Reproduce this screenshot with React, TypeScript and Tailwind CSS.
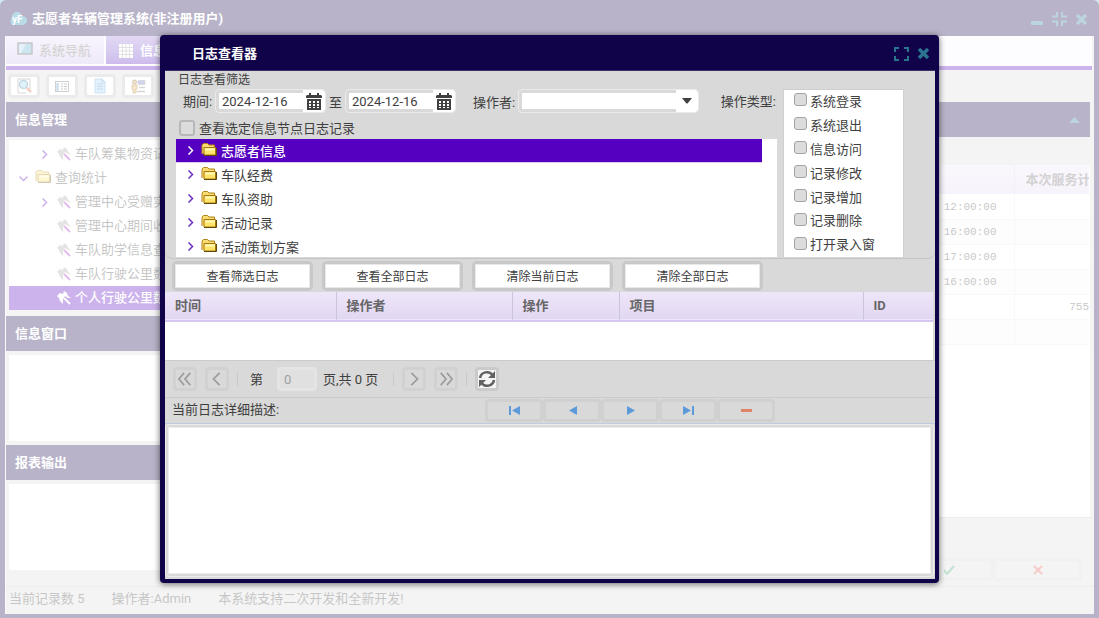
import type { ReactNode } from 'react';

const TREE = ['志愿者信息', '车队经费', '车队资助', '活动记录', '活动策划方案'];
const LOG_TYPES = ['系统登录', '系统退出', '信息访问', '记录修改', '记录增加', '记录删除', '打开录入窗'];
const LOG_ACTIONS = ['查看筛选日志', '查看全部日志', '清除当前日志', '清除全部日志'];

const NAV_ITEMS = [
  { label: '车队筹集物资记录', arrow: true },
  { label: '查询统计', folder: true },
  { label: '管理中心受赠实物', arrow: true },
  { label: '管理中心期间收支' },
  { label: '车队助学信息查询' },
  { label: '车队行驶公里数' },
  { label: '个人行驶公里数', selected: true },
];

const GRID_ROWS = [
  { time: '12:00:00', hours: '' },
  { time: '16:00:00', hours: '' },
  { time: '17:00:00', hours: '' },
  { time: '16:00:00', hours: '' },
  { time: '', hours: '755' },
  { time: '', hours: '' },
];

export default function App() {
  return (
    <div className="relative min-h-screen flex flex-col overflow-hidden bg-[#6cb4d4] font-['Roboto','Noto_Sans_CJK_SC',sans-serif] text-[13px] text-[#404040]">
      <MainWindow />

      {/* Modal mask */}
      <div className="absolute inset-0 bg-white/70" />

      <div className="absolute inset-0 flex items-center justify-center">
        <LogViewer />
      </div>
    </div>
  );
}

// ── Main window ──────────────────────────────────────────────────────────────

function MainWindow() {
  return (
    <div className="flex-1 flex flex-col rounded-t-md bg-[#110349] px-[5px] pb-1">
      <header className="h-9 flex items-center pt-[2px] pl-1 pr-[6px] text-white">
        <CloudLogo />
        <h1 className="ml-[5px] flex-1 font-bold">志愿者车辆管理系统(非注册用户)</h1>
        <div className="flex items-center gap-2 text-[#207090]">
          <button aria-label="最小化">
            <svg width="14" height="14" viewBox="0 0 14 14"><rect x="1" y="9" width="12" height="4" rx="1" fill="currentColor" /></svg>
          </button>
          <button aria-label="还原">
            <svg width="15" height="14" viewBox="0 0 15 14" fill="none" stroke="currentColor" strokeWidth="2">
              <path d="M0 4.500h5V0M10 0v4.500h5M0 9.500h5V14M15 9.500h-5V14" />
            </svg>
          </button>
          <button aria-label="关闭"><CrossIcon /></button>
        </div>
      </header>

      <div className="flex-1 flex flex-col bg-[#d9d9d9] border-l border-[#eeeeee]">
        {/* Tabs */}
        <nav className="h-[30px] mr-[2px] flex gap-[2px] bg-[#f8f8ff]">
          <a href="#nav" className="h-7 w-[98px] flex items-center gap-[6px] pt-px pl-[11px] font-medium text-[#707070] bg-linear-to-b from-[#e8dcf8] to-[#cbb8e8]">
            <svg className="mb-1" width="16" height="14" viewBox="0 0 16 14"><rect x="1" y="1" width="14" height="11" fill="#58a8d0" stroke="#444" strokeWidth="1.500" /><path d="M2 2h7L4 11H2z" fill="#a8d4ea" /></svg>
            系统导航
          </a>
          <a href="#info" className="h-7 w-[98px] flex items-center gap-[6px] pt-px pl-3 font-bold text-white bg-linear-to-b from-[#a080d8] to-[#5c18c0]">
            <svg width="16" height="16" viewBox="0 0 16 16"><rect x="1" y="1" width="14" height="14" fill="#fff" /><path d="M1 4.500h14M1 8h14M1 11.500h14M4.500 1v14M8 1v14M11.500 1v14" stroke="#999" /></svg>
            信息管理
          </a>
        </nav>
        <div className="h-1 mr-[2px] bg-[#5500bf]" />

        <div className="flex-1 flex">
          <Sidebar />
          <DataPanel />
        </div>

        <footer className="h-7 flex items-start gap-[27px] pt-[2px] pl-[3px] border-t border-[#c4c4c4]">
          <span>当前记录数 5</span>
          <span>操作者:Admin</span>
          <span>本系统支持二次开发和全新开发!</span>
        </footer>
      </div>
    </div>
  );
}

function Sidebar() {
  return (
    <aside className="w-[214px] flex flex-col">
      <div className="h-8 flex items-center gap-[6px] pl-[2px]">
        <ToolButton label="查找">
          <path d="M2 1h12v10" stroke="#777" /><path d="M2 1v14h8" stroke="#777" />
          <circle cx="7.500" cy="6.500" r="4" fill="#9cd4f0" stroke="#38789c" strokeWidth="1.500" />
          <path d="M11 10l4 4" stroke="#d86030" strokeWidth="2.500" />
        </ToolButton>
        <ToolButton label="列表">
          <rect x="1.500" y="3.500" width="13" height="10" stroke="#666" /><path d="M3.500 5v8" stroke="#2878b8" strokeWidth="2" />
          <path d="M7 6h2M7 8.500h2M7 11h2M10 6h3M10 8.500h3M10 11h3" stroke="#555" />
        </ToolButton>
        <ToolButton label="文档">
          <path d="M3 1h7l3 3v11H3z" fill="#a4d4fc" stroke="#58a0d8" /><path d="M5 6h6M5 8.500h6M5 11h6M10 1v3h3" stroke="#3888c8" />
        </ToolButton>
        <ToolButton label="人员">
          <circle cx="4.500" cy="4" r="2" fill="#e8a840" stroke="#604010" /><path d="M2 7h5v4H6v4H3v-4H2z" fill="#e8a840" stroke="#a06820" />
          <path d="M8 2.500h7v4H8z" fill="#6868d8" stroke="#888" />
          <path d="M9 9.500h6M7 13.500h8" stroke="#777" strokeWidth="1.500" />
        </ToolButton>
      </div>

      <SideHeading>信息管理</SideHeading>
      <ul className="mt-[3px] ml-[3px] pt-[2px] bg-white overflow-hidden">
        {NAV_ITEMS.map(item => <NavRow key={item.label} {...item} />)}
      </ul>

      <div className="mt-[6px]"><SideHeading>信息窗口</SideHeading></div>
      <div className="h-[86px] my-1 ml-[3px] bg-white" />
      <SideHeading>报表输出</SideHeading>
      <div className="h-[86px] my-1 ml-[3px] bg-white" />
    </aside>
  );
}

function SideHeading({ children }: { children: ReactNode }) {
  return <h2 className="h-[35px] flex items-center pl-[9px] bg-[#110349] font-bold text-white">{children}</h2>;
}

function ToolButton({ label, children }: { label: string; children: ReactNode }) {
  return (
    <button aria-label={label} className="w-8 h-6 flex items-center justify-center rounded border-[3px] border-[#bcbcbc] bg-white">
      <svg width="16" height="16" viewBox="0 0 16 16" fill="none">{children}</svg>
    </button>
  );
}

function NavRow({ label, arrow, folder, selected }: { label: string; arrow?: boolean; folder?: boolean; selected?: boolean }) {
  if (folder) {
    return (
      <li className="h-6 flex items-center pl-[10px] whitespace-nowrap">
        <Chevron className="rotate-90 text-[#5500bf]" />
        <span className="ml-[7px] mr-[4px] pb-[3px]"><FolderIcon /></span>
        {label}
      </li>
    );
  }
  return (
    <li className={`h-6 flex items-center pl-[31px] whitespace-nowrap ${selected ? 'bg-[#5500bf] text-white font-medium' : ''}`}>
      <span className="w-4"><Chevron className={arrow ? 'text-[#5500bf]' : 'invisible'} /></span>
      <svg className="mr-[3px]" width="16" height="16" viewBox="0 0 16 16">
        <path d="M1 6l3-3 3 1 1-3 3 2 1 3 3 2-3 0-3-2-2 3 0 5-3-3-1-3z" fill={selected ? '#fff' : '#a4a4a4'} />
        <path d="M8 8l6 6" stroke={selected ? '#fff' : '#a020c0'} strokeWidth="2" />
      </svg>
      {label}
    </li>
  );
}

function DataPanel() {
  return (
    <main className="flex-1 min-w-0 flex flex-col pt-8 pl-1 pr-1">
      <div className="h-[35px] flex items-center justify-end pr-[10px] bg-[#110349]">
        <svg width="11" height="6" viewBox="0 0 11 6"><path d="M5.500 0L11 6H0z" fill="#207090" /></svg>
      </div>
      <div className="mt-7 flex-1 pr-px bg-white overflow-hidden">
        <table className="w-full table-fixed border-collapse">
          <thead>
            <tr className="h-[29px] bg-linear-to-b from-[#ede4f8] to-[#e2d7f2]">
              <th className="border-r border-[#d8d0e4]" />
              <th className="w-[75px] pl-[11px] text-left font-bold text-[#666] whitespace-nowrap overflow-hidden">本次服务计</th>
            </tr>
          </thead>
          <tbody className="font-['Liberation_Mono',monospace] text-[11px]">
            {GRID_ROWS.map((row, i) => (
              <tr key={i} className="h-[25px] border-b border-[#e8e8e8] even:bg-[#f8f8f8]">
                <td className="pt-[2px] pr-[17px] text-right border-r border-[#e8e8e8]">{row.time}</td>
                <td className="pt-px text-right">{row.hours}</td>
              </tr>
            ))}
          </tbody>
        </table>
      </div>
      <div className="h-[69px] flex items-end justify-end pr-2 pb-[5px] border-t border-[#c0c0c0]">
        <button aria-label="确定" className="w-[89px] h-[23px] flex items-center justify-center rounded border-[3px] border-[#d0d0d0]">
          <svg width="12" height="10" viewBox="0 0 12 10"><path d="M1 5l3 4 7-8" fill="none" stroke="#2fa060" strokeWidth="2" /></svg>
        </button>
        <button aria-label="取消" className="w-[89px] h-[23px] flex items-center justify-center rounded border-[3px] border-[#d0d0d0]">
          <svg width="10" height="10" viewBox="0 0 10 10"><path d="M1 1l8 8M9 1L1 9" stroke="#e05048" strokeWidth="2" /></svg>
        </button>
      </div>
    </main>
  );
}

// ── Log viewer dialog ────────────────────────────────────────────────────────

function LogViewer() {
  return (
    <section
      role="dialog"
      aria-labelledby="log-title"
      className="w-full max-w-[779px] flex flex-col rounded-[4px] bg-[#110349] pl-[5px] pr-1 pb-1 shadow-[0_1px_6px_rgba(0,0,0,0.6)]"
    >
      <header className="h-9 flex items-center gap-2 pt-[2px] pl-[27px] pr-[5px] border-b border-[#3a3068]">
        <h2 id="log-title" className="flex-1 font-bold text-white">日志查看器</h2>
        <button aria-label="最大化" className="text-[#2a7490]">
          <svg width="15" height="14" viewBox="0 0 15 14" fill="none" stroke="currentColor" strokeWidth="2">
            <path d="M1 5V1h4M10 1h4v4M14 9v4h-4M5 13H1V9" />
          </svg>
        </button>
        <button aria-label="关闭" className="text-[#2a7490]"><CrossIcon /></button>
      </header>

      <div className="bg-[#d9d9d9]">
        <FilterPanel />

        <div className="h-[33px] flex gap-[9px] pl-[7px] pt-[2px]">
          {LOG_ACTIONS.map(label => (
            <button key={label} className="w-[141px] h-[30px] rounded-[5px] bg-[#c8c8c8] p-[3px] text-xs">
              <span className="h-full flex items-center justify-center pt-px border border-[#e8e8e8] bg-white">{label}</span>
            </button>
          ))}
        </div>

        <div className="h-[68px] mr-[2px] bg-white">
          <table className="w-full table-fixed border-collapse text-left text-[#666]">
            <thead>
              <tr className="h-[29px] bg-linear-to-b from-[#eee6f9] to-[#e2d7f2] border-b-2 border-[#d8c6f2]">
                <th className="w-[171px] pl-[10px] border-r border-[#ccc4dc]">时间</th>
                <th className="w-[176px] pl-[10px] border-r border-[#ccc4dc]">操作者</th>
                <th className="w-[107px] pl-[10px] border-r border-[#ccc4dc]">操作</th>
                <th className="w-[244px] pl-[10px] border-r border-[#ccc4dc]">项目</th>
                <th className="pl-[10px]">ID</th>
              </tr>
            </thead>
          </table>
        </div>

        <Pager />
        <DetailPane />
      </div>
    </section>
  );
}

function FilterPanel() {
  return (
    <fieldset className="flex-none rounded-b-lg border-b border-[#c4c4c4] pb-px">
      <legend className="h-[18px] pl-[13px] text-xs leading-[18px]">日志查看筛选</legend>
      <div className="flex pr-[31px]">
        <div className="flex-1 min-w-0">
          <div className="h-6 flex items-center">
            <label htmlFor="date-from" className="w-[50px] pt-[2px] pl-[18px]">期间:</label>
            <DateField id="date-from" />
            <label htmlFor="date-to" className="w-[19px] pt-[3px] text-center">至</label>
            <DateField id="date-to" />
            <label htmlFor="operator" className="w-[62px] pt-[3px] pl-[17px]">操作者:</label>
            <div className="w-[181px] h-6 flex rounded border border-[#ebebeb]">
              <select id="operator" className="flex-1 my-[3px] ml-[3px] appearance-none bg-white outline-none" />
              <span className="w-[22px] flex items-center justify-center rounded-r bg-white">
                <svg width="10" height="6" viewBox="0 0 10 6"><path d="M0 0h10L5.500 5.500h-1z" fill="#404040" /></svg>
              </span>
            </div>
            <span id="log-types" className="ml-auto pt-[2px] pr-px">操作类型:</span>
          </div>

          <label className="h-[26px] flex items-center gap-1 pl-[14px] pt-[4px]">
            <input type="checkbox" className="appearance-none w-4 h-4 rounded-[3px] border-2 border-[#b8b8b8] bg-[#dcdcdc]" />
            <span className="pt-px">查看选定信息节点日志记录</span>
          </label>

          <ul className="h-[118px] ml-[11px] pr-[15px] overflow-hidden bg-white">
            {TREE.map((name, i) => (
              <li
                key={name}
                className={`h-6 flex items-center border-b pl-[10px] ${i === 0 ? 'bg-[#5500c0] border-[#dccaf4] text-white font-medium' : 'border-transparent'}`}
              >
                <Chevron className={i === 0 ? 'text-white' : 'text-[#6a30c8]'} />
                <span className="ml-[6px] mr-[4px] pb-[2px]"><FolderIcon /></span>
                <span className="pt-[3px]">{name}</span>
              </li>
            ))}
          </ul>
        </div>

        <div role="group" aria-labelledby="log-types" className="ml-[6px] w-[121px] h-[168px] flex flex-col border border-[#cfcfcf] border-b-0 bg-white pl-[10px]">
          {LOG_TYPES.map(type => (
            <label key={type} className="flex-1 flex items-center gap-[3px]">
              <input type="checkbox" className="appearance-none w-[13px] h-[13px] mb-1 rounded-[3px] border border-[#a4a4a4] bg-[#dcdcdc]" />
              {type}
            </label>
          ))}
        </div>
      </div>
    </fieldset>
  );
}

function DateField({ id }: { id: string }) {
  return (
    <div className="w-[111px] h-6 flex rounded border border-[#ebebeb]">
      <input id={id} type="text" defaultValue="2024-12-16" className="flex-1 min-w-0 my-[3px] ml-[3px] pt-px pl-[3px] bg-white outline-none" />
      <button aria-label="选择日期" className="w-[22px] flex items-center justify-center rounded-r bg-white">
        <svg width="16" height="17" viewBox="0 0 16 17">
          <path d="M3 0h2v2h6V0h2v2h2l1 1v2H0V3l1-1h2zM1 6h14v11H1z" fill="#404040" />
          <path d="M3 8h2v2H3zM7 8h2v2H7zM11 8h2v2h-2zM3 11h2v2H3zM7 11h2v2H7zM11 11h2v2h-2zM3 14h2v1H3zM7 14h2v1H7zM11 14h2v1h-2z" fill="#fff" />
        </svg>
      </button>
    </div>
  );
}

function Pager() {
  return (
    <div className="h-[38px] flex items-center border-y border-[#cbcbcb] pl-2">
      <PageButton label="第一页" d="M7 1L1 8l6 7M14 1L8 8l6 7" />
      <span className="w-2" />
      <PageButton label="上一页" d="M11 1L4 8l7 7" />
      <Separator />
      <label htmlFor="page" className="w-[27px] ml-1 pt-[2px]">第</label>
      <input
        id="page"
        type="text"
        disabled
        defaultValue="0"
        className="w-10 h-6 rounded border-[3px] border-[#e4e4e4] bg-[#e0e0e0] pl-[4px] text-[#a0a0a0]"
      />
      <span className="w-[68px] pl-[6px] pt-[2px] whitespace-nowrap">页,共 0 页</span>
      <Separator />
      <PageButton label="下一页" d="M5 1l7 7-7 7" />
      <span className="w-2" />
      <PageButton label="最后一页" d="M2 1l6 7-6 7M9 1l6 7-6 7" />
      <Separator />
      <button aria-label="刷新" className="w-6 h-6 flex items-center justify-center rounded border-[3px] border-[#cacaca] bg-[#f4f4f4]">
        <svg width="18" height="18" viewBox="0 0 18 18" fill="none" stroke="#606060" strokeWidth="2.500">
          <path d="M2 8a7 7 0 0 1 12.500-3M16 10a7 7 0 0 1-12.500 3" />
          <path d="M17 1v7h-7zM1 17v-7h7z" fill="#606060" stroke="none" />
        </svg>
      </button>
    </div>
  );
}

function Separator() {
  return <span className="mx-2 h-[14px] w-px bg-[#cacaca]" />;
}

function PageButton({ label, d }: { label: string; d: string }) {
  return (
    <button aria-label={label} className="w-6 h-6 flex items-center justify-center rounded border-[3px] border-[#d1d1d1]">
      <svg width="14" height="14" viewBox="0 0 16 16" fill="none" stroke="#9c9c9c" strokeWidth="2"><path d={d} /></svg>
    </button>
  );
}

function DetailPane() {
  return (
    <>
      <div className="h-[25px] flex items-center pb-px pl-[7px]">
        <label htmlFor="detail" className="w-[313px]">当前日志详细描述:</label>
        <RecordButton label="首条"><path d="M1 1h2v9H1z" /><path d="M12 1v9L4 5.500z" /></RecordButton>
        <RecordButton label="上一条"><path d="M11 1v9L3 5.500z" /></RecordButton>
        <RecordButton label="下一条"><path d="M3 1v9l8-4.500z" /></RecordButton>
        <RecordButton label="末条"><path d="M1 1v9l8-4.500z" /><path d="M10 1h2v9h-2z" /></RecordButton>
        <RecordButton label="删除"><path d="M1 4h11v3H1z" fill="#e08468" /></RecordButton>
      </div>
      <div className="border-t border-[#bccbe0] pb-[2px] pr-px">
        <div className="rounded border border-[#ececec] p-[2px]">
          <textarea id="detail" className="block w-full h-[147px] resize-none border border-[#ececec] bg-white outline-none" />
        </div>
      </div>
    </>
  );
}

function RecordButton({ label, children }: { label: string; children: ReactNode }) {
  return (
    <button aria-label={label} className="w-[58px] h-[23px] flex items-center justify-center rounded border-[3px] border-[#d0d0d0]">
      <svg width="13" height="11" viewBox="0 0 13 11" fill="#5c9bd8">{children}</svg>
    </button>
  );
}

// ── Icons ────────────────────────────────────────────────────────────────────

function Chevron({ className }: { className: string }) {
  return (
    <svg className={className} width="9" height="9" viewBox="0 0 9 9" fill="none" stroke="currentColor" strokeWidth="1.500">
      <path d="M2.500 0.500l4 4-4 4" />
    </svg>
  );
}

function FolderIcon() {
  return (
    <svg width="16" height="14" viewBox="0 0 16 14">
      <path d="M1 11V2l1.500-1.500h4L8 2h5.500v2" fill="#f8dc70" stroke="#b48414" />
      <path d="M3 4.500h11.500v7.500H3z" fill="#ffe468" stroke="#a87810" />
      <path d="M4 5.500h10v2H4z" fill="#fff8b8" />
      <path d="M3 12.500h12.500V5" fill="none" stroke="#604808" />
    </svg>
  );
}

function CrossIcon() {
  return (
    <svg width="13" height="13" viewBox="0 0 13 13"><path d="M2 2l9 9M11 2l-9 9" stroke="currentColor" strokeWidth="3.500" /></svg>
  );
}

function CloudLogo() {
  return (
    <svg width="18" height="14" viewBox="0 0 18 14">
      <path d="M4 13a4 4 0 0 1-1-7 5 5 0 0 1 10-2 4.500 4.500 0 0 1 1 9z" fill="#1484af" />
      <text x="3" y="11" fontSize="10" fontWeight="bold" fill="#fff">yF</text>
    </svg>
  );
}
